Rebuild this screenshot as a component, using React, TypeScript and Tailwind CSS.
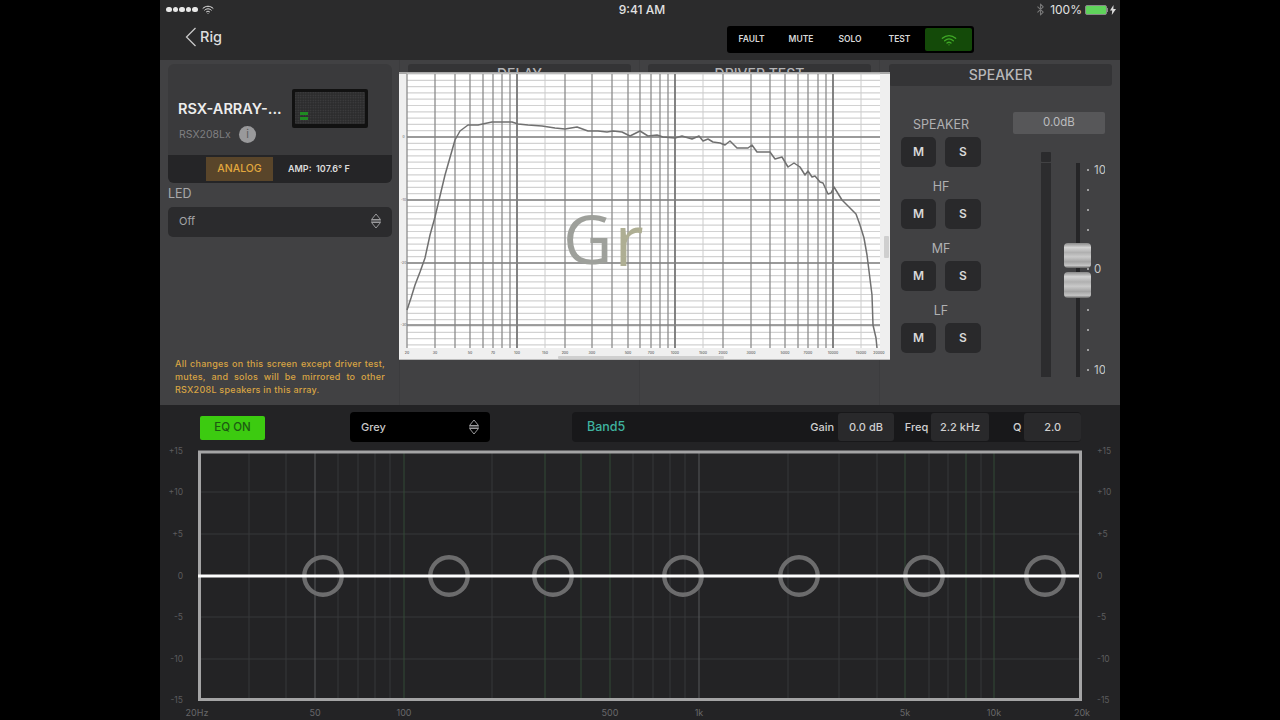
import React from "react";
import { Bluetooth } from "lucide-react";

const FONT = "font-['Inter','Liberation_Sans',sans-serif]";

const vHeavy = [407, 435, 455, 470, 483, 493, 502, 510, 565, 592, 612, 628, 640, 651, 660, 668, 723, 751, 770, 785, 798, 808, 818, 826];
const vThick = [517, 675, 833];
const vLight = [545, 703, 861];
const hHeavy = [137, 200, 263, 325];
const hMinor: number[] = [];
for (let i = 0; i < 44; i++) {
  const y = 74 + i * 6.3;
  if (y < 348) hMinor.push(y);
}
const ticks: [number, string][] = [
  [407, "20"], [435, "30"], [470, "50"], [493, "70"], [517, "100"], [545, "150"], [565, "200"], [592, "300"], [628, "500"],
  [651, "700"], [675, "1000"], [703, "1500"], [723, "2000"], [751, "3000"], [785, "5000"], [808, "7000"], [833, "10000"], [861, "15000"], [879, "20000"],
];
const curve =
  "407,310 411,298 415,285 420,272 425,258 430,235 435,217 445,175 455,140 460,131 468,125 478,125 492,122 512,122 518,124 528,125 542,126 555,128 565,129 577,127 588,131 598,131 607,132 613,131 622,132 630,136 640,131 648,136 657,135 663,137 675,138 682,136 692,139 699,136 703,141 708,139 713,142 720,143 725,145 730,141 737,148 748,148 752,145 757,152 765,152 770,152 775,159 782,157 788,167 794,163 800,167 805,175 808,171 812,177 815,176 820,182 823,183 828,194 831,193 834,187 842,200 850,208 856,214 860,225 864,238 867,255 872,295 873,325 876,338 877,348";

const eqGray = [249, 286, 338, 358, 375, 390, 492, 633, 653, 670, 685, 788, 839, 877, 929, 948, 981];
const eqGreen = [404, 545, 581, 610, 905, 966, 994];
const eqH = [492, 534, 617, 659];
const eqY: [number, string][] = [[451, "+15"], [492, "+10"], [534, "+5"], [576, "0"], [617, "-5"], [659, "-10"], [700, "-15"]];
const eqX: [number, string][] = [[197, "20Hz"], [315, "50"], [404, "100"], [610, "500"], [699, "1k"], [905, "5k"], [994, "10k"], [1082, "20k"]];
const handles = [323, 449, 553, 683, 799, 924, 1045];
const channels = ["SPEAKER", "HF", "MF", "LF"];
const faderDots = [170, 190, 210, 230, 250, 269, 290, 310, 330, 350, 370];

function UpDown({ color = "#9a9a9c" }: { color?: string }) {
  return (
    <svg width="12" height="16" viewBox="0 0 12 16" fill="none" stroke={color} strokeWidth="1">
      <path d="M1.5 6.5 6 1l4.5 5.5z" />
      <path d="M1.5 9.5 6 15l4.5-5.5z" />
      <path d="M1 8h10" />
    </svg>
  );
}

function Wifi({ color, size }: { color: string; size: number }) {
  return (
    <svg width={size} height={size * 0.75} viewBox="0 0 24 18" fill="none" stroke={color} strokeWidth="2" strokeLinecap="round">
      <path d="M2 6.5C8 1 16 1 22 6.5" />
      <path d="M5.5 10.2C9.5 6.6 14.5 6.6 18.5 10.2" />
      <path d="M9 13.6C11 12 13 12 15 13.6" />
      <circle cx="12" cy="16.3" r="1" fill={color} stroke="none" />
    </svg>
  );
}

function TabHeader({ label }: { label: string }) {
  return (
    <div className="mx-2 mt-1 h-[22px] rounded-[3px] bg-[#343436] text-center text-[14px] leading-[20px] font-medium text-[#b4b4b6]">
      {label}
    </div>
  );
}

function Grille() {
  return (
    <svg width="76" height="39" viewBox="0 0 76 39" className="block">
      <defs>
        <pattern id="dots" width="2.5" height="2.5" patternUnits="userSpaceOnUse">
          <rect width="2.5" height="2.5" fill="#2c2c2d" />
          <circle cx="1.25" cy="1.25" r="0.7" fill="#434345" />
        </pattern>
      </defs>
      <rect width="76" height="39" rx="2" fill="#111111" />
      <rect x="3" y="3" width="70" height="32" rx="1" fill="url(#dots)" />
      <rect x="8" y="23" width="8" height="3" fill="#1f8a22" />
      <rect x="8" y="28" width="8" height="3" fill="#1f8a22" />
    </svg>
  );
}

export default function App() {
  return (
    <div className={`flex h-[720px] w-full justify-center overflow-hidden bg-black ${FONT}`}>
      <div className="flex h-[720px] w-[960px] flex-col">
        {/* top bar */}
        <header className="h-[60px] bg-[#2b2b2c]">
          <div className="grid h-[19px] grid-cols-3 items-center pl-[6px] pr-[4px] text-[12px] text-[#e2e2e2]">
            <div className="flex items-center gap-[1px]">
              {[0, 1, 2, 3, 4].map((i) => (
                <span key={i} className="h-[5.5px] w-[5.5px] rounded-full bg-[#e8e8e8]" />
              ))}
              <span className="ml-[3px]">
                <Wifi color="#e8e8e8" size={12} />
              </span>
            </div>
            <div className="pl-[2px] text-center font-medium">9:41 AM</div>
            <div className="flex items-center justify-end gap-[2px] text-[12px]">
              <Bluetooth size={13} className="text-[#777]" />
              <span className="ml-[1px]">100%</span>
              <span className="ml-[1px] flex items-center">
                <span className="block h-[10px] w-[22px] rounded-[2px] border border-[#888] bg-[#5fd35b] p-0" />
                <span className="block h-[4px] w-[1px] bg-[#888]" />
              </span>
              <svg width="6" height="10" viewBox="0 0 6 10" fill="#ddd"><path d="M3.5 0 0 5.6h2.2L1.8 10 6 3.9H3.4z" /></svg>
            </div>
          </div>
          <div className="flex h-[41px] items-center pl-[25px] pr-[146px]">
            <svg width="12" height="20" viewBox="0 0 12 20" fill="none" stroke="#c8c8c8" strokeWidth="1.3" className="mb-[5px]">
              <path d="M10.5 1 1.5 10l9 9" />
            </svg>
            <span className="mb-[5px] ml-[3px] text-[14.5px] font-medium text-[#dedede]">Rig</span>
            <div className="ml-auto flex h-[27px] w-[247px] items-center rounded-[3px] bg-black pl-[2px] text-[8.5px] font-semibold text-[#d8d8d8]">
              <span className="w-[45px] text-center">FAULT</span>
              <span className="ml-[2px] w-[50px] text-center">MUTE</span>
              <span className="w-[48px] text-center">SOLO</span>
              <span className="w-[51px] text-center">TEST</span>
              <div className="flex h-[23px] w-[47px] items-center justify-center rounded-[2px] bg-[#144a09]">
                <Wifi color="#3fa826" size={16} />
              </div>
            </div>
          </div>
        </header>

        {/* middle */}
        <section className="relative grid h-[345px] grid-cols-4 bg-[#414143]">
          <div className="flex flex-col border-r border-[#3c3c3e] pl-[8px] pr-[7px] pt-[4px]">
            <div className="h-[119px] overflow-hidden rounded-[6px] bg-[#3a3a3c]">
              <div className="flex h-[91px]">
                <div className="w-[124px] pl-[10px] pt-[34px]">
                  <div className="mt-[1px] text-[14.5px] leading-[20px] font-semibold whitespace-nowrap text-[#ededed]">RSX-ARRAY-...</div>
                  <div className="mt-[7px] flex items-center gap-[8px] pl-[1px]">
                    <span className="w-[52px] text-[10.5px] whitespace-nowrap text-[#7f7f81]">RSX208Lx</span>
                    <span className="flex h-[17px] w-[17px] items-center justify-center rounded-full bg-[#99999b] text-[11px] text-[#5a5a5c]">i</span>
                  </div>
                </div>
                <div className="pt-[25px]">
                  <Grille />
                </div>
              </div>
              <div className="flex h-[28px] items-center bg-[#252527]">
                <div className="ml-[38px] flex h-[24px] w-[67px] items-center justify-center bg-[#59452a] text-[10.5px] font-medium text-[#e2a83e]">ANALOG</div>
                <div className="ml-[15px] text-[9px] font-semibold text-[#dcdcdc]">AMP:&nbsp; 107.6° F</div>
              </div>
            </div>
            <div className="mt-[3px] text-[12.5px] leading-[16px] text-[#a8a8aa]">LED</div>
            <div className="mt-[5px] flex h-[30px] items-center justify-between rounded-[5px] bg-[#2b2b2d] pb-[2px] pl-[11px] pr-[10px] text-[11px] text-[#a4a4a6]">
              <span>Off</span>
              <UpDown />
            </div>
            <p className="mt-[120px] px-[7px] text-justify text-[9px] leading-[13px] font-medium tracking-[0.25px] text-[#d8a443]">
              All changes on this screen except driver test, mutes, and solos will be mirrored to other RSX208L speakers in this array.
            </p>
          </div>
          <div className="border-r border-[#3c3c3e]">
            <TabHeader label="DELAY" />
          </div>
          <div className="border-r border-[#3c3c3e]">
            <TabHeader label="DRIVER TEST" />
          </div>
          <div className="relative">
            <div className="ml-[9px] mr-[8px] mt-[4px] h-[22px] rounded-[3px] bg-[#343436] text-center text-[14px] leading-[21px] font-medium text-[#b8b8ba]">SPEAKER</div>
            <div className="flex">
              <div className="ml-[21px] mt-[30px] flex w-[80px] flex-col">
                {channels.map((c) => (
                  <div key={c} className="flex h-[62px] flex-col items-center">
                    <div className="h-[18px] text-[12.5px] leading-[18px] text-[#b0b0b2]">{c}</div>
                    <div className="mt-[3px] flex gap-[9px]">
                      <div className="flex h-[30px] w-[35px] items-center justify-center rounded-[5px] bg-[#29292b] text-[12px] font-semibold text-[#d8d8d8]">M</div>
                      <div className="flex h-[30px] w-[36px] items-center justify-center rounded-[5px] bg-[#29292b] text-[12px] font-semibold text-[#d8d8d8]">S</div>
                    </div>
                  </div>
                ))}
              </div>
              <div className="ml-[32px] mt-[26px] flex w-[92px] flex-col">
                <div className="flex h-[22px] items-center justify-center rounded-[2px] bg-[#575759] text-[11.5px] text-[#bcbcbe]">0.0dB</div>
                <svg width="92" height="235" viewBox="1013 152 92 235" className="mt-[18px] block">
                  <rect x="1041" y="152" width="10" height="10" rx="1" fill="#2b2b2d" />
                  <rect x="1041" y="163" width="10" height="214" fill="#2c2c2e" />
                  <rect x="1076" y="163" width="4" height="214" fill="#252527" />
                  {faderDots.map((y) => (
                    <circle key={y} cx="1088" cy={y} r="1" fill="#bdbdbd" />
                  ))}
                  <text x="1094" y="174" fontSize="11.5" fill="#c8c8c8">10</text>
                  <text x="1094" y="273" fontSize="11.5" fill="#c8c8c8">0</text>
                  <text x="1094" y="374" fontSize="11.5" fill="#c8c8c8">10</text>
                  <defs>
                    <linearGradient id="capA" x1="0" y1="0" x2="0" y2="1">
                      <stop offset="0" stopColor="#8a8a8a" />
                      <stop offset="0.18" stopColor="#d4d4d4" />
                      <stop offset="0.38" stopColor="#b0b0b0" />
                      <stop offset="0.55" stopColor="#c9c9c9" />
                      <stop offset="0.75" stopColor="#a4a4a4" />
                      <stop offset="0.9" stopColor="#c4c4c4" />
                      <stop offset="1" stopColor="#666666" />
                    </linearGradient>
                  </defs>
                  <rect x="1064" y="243" width="27" height="25" rx="4" fill="url(#capA)" />
                  <rect x="1064" y="272" width="27" height="26" rx="4" fill="url(#capA)" />
                </svg>
              </div>
            </div>
          </div>

          {/* floating response graph, laid over the panels */}
          <div className="absolute left-[239px] top-[12px] h-[288px] w-[491px] bg-[#efefef]">
            <svg width="491" height="288" viewBox="399 72 491 288" className="block">
              <rect x="399" y="72" width="491" height="2" fill="#a8a8a8" />
              <rect x="407" y="74" width="473" height="274" fill="#ffffff" />
              {hMinor.map((y) => (
                <line key={y} x1="407" x2="880" y1={y} y2={y} stroke="#d2d2d2" strokeWidth="1.2" />
              ))}
              {vLight.map((x) => (
                <line key={x} x1={x} x2={x} y1="74" y2="348" stroke="#cccccc" strokeWidth="1" />
              ))}
              {vHeavy.map((x) => (
                <line key={x} x1={x} x2={x} y1="74" y2="348" stroke="#8c8c8c" strokeWidth="1.3" />
              ))}
              {vThick.map((x) => (
                <line key={x} x1={x} x2={x} y1="74" y2="348" stroke="#757575" strokeWidth="1.8" />
              ))}
              {hHeavy.map((y) => (
                <line key={y} x1="407" x2="880" y1={y} y2={y} stroke="#808080" strokeWidth="1.6" />
              ))}
              <polyline points={curve} fill="none" stroke="#707070" strokeWidth="1.5" strokeLinejoin="round" />
              {ticks.map(([x, t]) => (
                <text key={t} x={x} y="354" fontSize="3.6" textAnchor="middle" fill="#444">{t}</text>
              ))}
              {hHeavy.map((y, i) => (
                <text key={y} x="403.5" y={y + 1} fontSize="3.4" textAnchor="middle" fill="#555">{["0", "-10", "-20", "-30"][i]}</text>
              ))}
              <rect x="558" y="356" width="166" height="3" rx="1" fill="#cfcfcf" />
              <rect x="884" y="236" width="5" height="22" rx="1" fill="#cfcfcf" />
              <rect x="399" y="359" width="491" height="1" fill="#bdbdbd" />
            </svg>
            <div className="absolute left-[164px] top-[132px] flex font-['Open_Sans',sans-serif] text-[68px] leading-[68px] text-[#9ea09b]">
              <span>G</span>
              <span className="relative left-[2px] top-[1px] text-[71px] leading-[68px] text-[#aeae93]">r</span>
            </div>
          </div>
        </section>

        {/* EQ */}
        <section className="flex flex-1 flex-col bg-[#232325]">
          <div className="flex h-[38px] items-start pt-[7px]">
            <div className="ml-[40px] mt-[4px] flex h-[24px] w-[65px] items-center justify-center rounded-[2px] bg-[#3ccb10] text-[11.5px] font-medium text-[#1d5a12]">EQ ON</div>
            <div className="ml-[85px] flex h-[30px] w-[140px] items-center justify-between rounded-[4px] bg-black pl-[11px] pr-[10px] text-[11px] font-medium text-[#c8c8c8]">
              <span>Grey</span>
              <UpDown />
            </div>
            <div className="ml-[82px] flex h-[30px] w-[509px] items-center rounded-[4px] bg-[#18181a] pl-[15px] pr-0 text-[11px] font-medium text-[#d0d0d0]">
              <span className="text-[12.5px] text-[#3fb3a0]">Band5</span>
              <span className="ml-[185px]">Gain</span>
              <span className="ml-[4px] flex h-[28px] w-[56px] items-center justify-center rounded-[3px] bg-[#29292b]">0.0 dB</span>
              <span className="ml-[11px]">Freq</span>
              <span className="ml-[3px] flex h-[28px] w-[58px] items-center justify-center rounded-[3px] bg-[#29292b]">2.2 kHz</span>
              <span className="ml-[24px]">Q</span>
              <span className="ml-[3px] flex h-[28px] w-[57px] items-center justify-center rounded-[3px] bg-[#29292b]">2.0</span>
            </div>
          </div>
          <svg width="960" height="277" viewBox="160 443 960 277" className="block">
            {eqH.map((y) => (
              <line key={y} x1="198" x2="1082" y1={y} y2={y} stroke="#37383a" strokeWidth="1" />
            ))}
            {eqGray.map((x) => (
              <line key={x} x1={x} x2={x} y1="451" y2="700" stroke="#37393b" strokeWidth="1" />
            ))}
            {eqGreen.map((x) => (
              <line key={x} x1={x} x2={x} y1="451" y2="700" stroke="#324a37" strokeWidth="1" />
            ))}
            <line x1="315" x2="315" y1="451" y2="700" stroke="#56595b" strokeWidth="1" />
            <line x1="699" x2="699" y1="451" y2="700" stroke="#56595b" strokeWidth="1" />
            <rect x="199.5" y="452" width="881" height="247.5" fill="none" stroke="#a4a4a5" strokeWidth="3" />
            {handles.map((x) => (
              <circle key={x} cx={x} cy="576" r="18.7" fill="none" stroke="#6c6c6d" strokeWidth="4.4" />
            ))}
            <line x1="198" x2="1079" y1="576" y2="576" stroke="#ffffff" strokeWidth="3" />
            {eqY.map(([y, t]) => (
              <text key={t} x="183" y={y + 3} fontSize="8.5" textAnchor="end" fill="#5c5c5e">{t}</text>
            ))}
            {eqY.map(([y, t]) => (
              <text key={t} x="1097" y={y + 3} fontSize="8.5" fill="#5c5c5e">{t}</text>
            ))}
            {eqX.map(([x, t]) => (
              <text key={t} x={x} y="716" fontSize="9" textAnchor="middle" fill="#68686a">{t}</text>
            ))}
          </svg>
        </section>
      </div>
    </div>
  );
}
